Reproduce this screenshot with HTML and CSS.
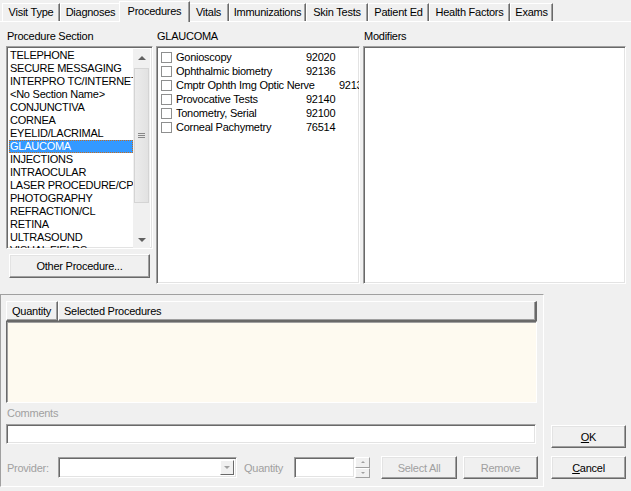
FILE: index.html
```html
<!DOCTYPE html>
<html>
<head>
<meta charset="utf-8">
<link rel="stylesheet" href="styles.css">
</head>
<body>
<div class="dialog">
  <div class="tabs">
    <div class="tab w-visit">Visit Type</div>
    <div class="tab w-diag">Diagnoses</div>
    <div class="tab w-proc active">Procedures</div>
    <div class="tab w-vitals">Vitals</div>
    <div class="tab w-imm">Immunizations</div>
    <div class="tab w-skin">Skin Tests</div>
    <div class="tab w-ped">Patient Ed</div>
    <div class="tab w-hf">Health Factors</div>
    <div class="tab w-exams">Exams</div>
  </div>
  <div class="page">
    <div class="top">
      <div class="col col-section">
        <div class="label">Procedure Section</div>
        <div class="listbox sunken">
          <ul class="items">
            <li>TELEPHONE</li>
            <li>SECURE MESSAGING</li>
            <li>INTERPRO TC/INTERNET</li>
            <li>&lt;No Section Name&gt;</li>
            <li>CONJUNCTIVA</li>
            <li>CORNEA</li>
            <li>EYELID/LACRIMAL</li>
            <li class="selected">GLAUCOMA</li>
            <li>INJECTIONS</li>
            <li>INTRAOCULAR</li>
            <li>LASER PROCEDURE/CPT</li>
            <li>PHOTOGRAPHY</li>
            <li>REFRACTION/CL</li>
            <li>RETINA</li>
            <li>ULTRASOUND</li>
            <li>VISUAL FIELDS</li>
          </ul>
          <div class="vscroll">
            <div class="sb-btn"><span class="arrow-up"></span></div>
            <div class="sb-track">
              <div class="sb-thumb"><span class="grip"></span></div>
            </div>
            <div class="sb-btn"><span class="arrow-down"></span></div>
          </div>
        </div>
        <div class="btn btn-other">Other Procedure...</div>
      </div>
      <div class="col col-proc">
        <div class="label">GLAUCOMA</div>
        <div class="box sunken proc-box">
          <div class="chk-row"><span class="chk"></span><span class="pname">Gonioscopy</span><span class="pcode">92020</span></div>
          <div class="chk-row"><span class="chk"></span><span class="pname">Ophthalmic biometry</span><span class="pcode">92136</span></div>
          <div class="chk-row"><span class="chk"></span><span class="pname wide">Cmptr Ophth Img Optic Nerve</span><span class="pcode">92133</span></div>
          <div class="chk-row"><span class="chk"></span><span class="pname">Provocative Tests</span><span class="pcode">92140</span></div>
          <div class="chk-row"><span class="chk"></span><span class="pname">Tonometry, Serial</span><span class="pcode">92100</span></div>
          <div class="chk-row"><span class="chk"></span><span class="pname">Corneal Pachymetry</span><span class="pcode">76514</span></div>
        </div>
      </div>
      <div class="col col-mod">
        <div class="label">Modifiers</div>
        <div class="box sunken mod-box"></div>
      </div>
    </div>
    <div class="lower">
      <div class="panel">
        <div class="listview">
          <div class="lv-header">
            <div class="hd hd-qty">Quantity</div>
            <div class="hd hd-sel">Selected Procedures</div>
          </div>
          <div class="lv-body"></div>
        </div>
        <div class="label disabled comments-label">Comments</div>
        <div class="edit sunken comments"></div>
        <div class="prov-row">
          <span class="disabled prov-label">Provider:</span>
          <div class="combo sunken">
            <div class="combo-btn"><span class="arrow-down small"></span></div>
          </div>
          <span class="disabled qty-label">Quantity</span>
          <div class="edit sunken qty-edit"></div>
          <div class="spin">
            <div class="spin-btn"><span class="arrow-up tiny"></span></div>
            <div class="spin-btn"><span class="arrow-down tiny"></span></div>
          </div>
          <div class="btn disabled-btn btn-selall">Select All</div>
          <div class="btn disabled-btn btn-remove">Remove</div>
        </div>
      </div>
      <div class="side">
        <div class="btn btn-ok"><u>O</u>K</div>
        <div class="btn btn-cancel"><u>C</u>ancel</div>
      </div>
    </div>
  </div>
</div>
</body>
</html>
```

FILE: styles.css
```css
html, body {
  margin: 0;
  padding: 0;
  background: #f0f0f0;
}
body {
  font-family: "Liberation Sans", Arial, sans-serif;
  font-size: 11px;
  letter-spacing: -0.25px;
  color: #000;
  width: 631px;
  height: 491px;
  overflow: hidden;
}
.dialog {
  display: flex;
  flex-direction: column;
}

/* tabs */
.tabs {
  display: flex;
  align-items: flex-end;
  height: 21px;
  padding-left: 2px;
}
.tab {
  box-sizing: border-box;
  height: 18px;
  line-height: 16px;
  text-align: center;
  border-top: 1px solid #fff;
  border-left: 1px solid #fff;
  border-right: 1px solid #696969;
  box-shadow: inset -1px 0 #a0a0a0;
  background: #f0f0f0;
  white-space: nowrap;
}
.tab.active {
  height: 21px;
  margin: 0 -2px -1px -2px;
  line-height: 18px;
  position: relative;
  z-index: 2;
}
.w-visit { width: 58px; }
.w-diag { width: 61px; }
.w-proc { width: 67px; }
.tab.w-proc.active { width: 71px; }
.w-vitals { width: 41px; }
.w-imm { width: 77px; }
.w-skin { width: 62px; }
.w-ped { width: 61px; }
.w-hf { width: 81px; }
.w-exams { width: 43px; }

.page {
  border-top: 1px solid #fff;
}

.sunken {
  box-sizing: border-box;
  border: 1px solid;
  border-color: #a0a0a0 #fff #fff #a0a0a0;
  box-shadow: inset 1px 1px #696969, inset -1px -1px #e3e3e3;
}
.label {
  height: 13px;
  line-height: 13px;
  white-space: nowrap;
}

.top {
  display: flex;
  padding-top: 8px;
}
.col-section {
  width: 147px;
  margin-left: 6px;
}
.col-proc {
  width: 204px;
  margin-left: 3px;
}
.col-mod {
  width: 263px;
  margin-left: 3px;
}
.col .label {
  margin-left: 1px;
  margin-bottom: 3px;
}

.listbox {
  height: 203px;
  background: #fff;
  display: flex;
  padding: 2px 2px 0 2px;
  overflow: hidden;
}
.items {
  list-style: none;
  margin: 0;
  padding: 0;
  flex: 1;
  overflow: hidden;
  height: 199px;
}
.items li {
  height: 13px;
  line-height: 13px;
  padding-left: 1px;
  white-space: nowrap;
  overflow: hidden;
}
.items li.selected {
  background: #3399ff;
  color: #fff;
  outline: 1px dotted #c66d1f;
  outline-offset: -1px;
}
.vscroll {
  width: 17px;
  height: 199px;
  display: flex;
  flex-direction: column;
  background: #f0f0f0;
}
.sb-btn {
  height: 17px;
  display: flex;
  align-items: center;
  justify-content: center;
}
.sb-track {
  flex: 1;
  padding: 2px 1px;
  background: #f0f0f0;
}
.sb-thumb {
  box-sizing: border-box;
  height: 135px;
  border: 1px solid #d4d4d4;
  background: linear-gradient(to right, #ececec, #e2e2e2);
  display: flex;
  align-items: center;
  justify-content: center;
}
.grip {
  width: 7px;
  height: 5px;
  border-top: 1px solid #888;
  border-bottom: 1px solid #888;
  box-sizing: border-box;
  background: linear-gradient(#888, #888) center / 100% 1px no-repeat;
}
.arrow-up {
  width: 0;
  height: 0;
  border-left: 4px solid transparent;
  border-right: 4px solid transparent;
  border-bottom: 4px solid #606060;
}
.arrow-down {
  width: 0;
  height: 0;
  border-left: 4px solid transparent;
  border-right: 4px solid transparent;
  border-top: 4px solid #606060;
}
.arrow-down.small {
  border-left-width: 3px;
  border-right-width: 3px;
  border-top: 3px solid #a0a0a0;
}
.arrow-up.tiny {
  border-left-width: 2px;
  border-right-width: 2px;
  border-bottom: 2px solid #a0a0a0;
}
.arrow-down.tiny {
  border-left-width: 2px;
  border-right-width: 2px;
  border-top: 2px solid #a0a0a0;
}

.btn {
  box-sizing: border-box;
  display: flex;
  align-items: center;
  justify-content: center;
  border: 1px solid;
  border-color: #fff #696969 #696969 #fff;
  box-shadow: inset -1px -1px #a0a0a0, inset 1px 1px #e3e3e3;
  background: #f0f0f0;
  white-space: nowrap;
}
.btn u {
  text-decoration: underline;
}
.btn-other {
  width: 141px;
  height: 24px;
  margin: 5px 0 0 3px;
}

.box {
  background: #fff;
}
.proc-box, .mod-box {
  height: 238px;
}
.proc-box {
  padding: 3px 2px 2px 4px;
  overflow: hidden;
}
.chk-row {
  display: flex;
  align-items: center;
  height: 14px;
  white-space: nowrap;
}
.chk {
  box-sizing: border-box;
  width: 11px;
  height: 11px;
  border: 1px solid #8e8f8f;
  background: #fff;
  flex: none;
}
.pname {
  margin-left: 4px;
  width: 130px;
  flex: none;
}
.pname.wide {
  width: 163px;
}
.pcode {
  flex: none;
}

/* lower */
.lower {
  display: flex;
  margin-top: 10px;
}
.panel {
  box-sizing: border-box;
  width: 544px;
  height: 193px;
  border: 1px solid;
  border-color: #a0a0a0 #fff #fff #a0a0a0;
  padding: 6px 0 0 5px;
}
.listview {
  width: 531px;
}
.lv-header {
  display: flex;
  height: 20px;
}
.hd {
  box-sizing: border-box;
  height: 20px;
  line-height: 18px;
  border: 1px solid;
  border-color: #fff #696969 #696969 #fff;
  box-shadow: inset -1px -1px #a0a0a0;
  padding-left: 5px;
  white-space: nowrap;
}
.hd-qty {
  width: 52px;
}
.hd-sel {
  flex: 1;
  border-right-width: 2px;
}
.lv-body {
  box-sizing: border-box;
  height: 82px;
  background: #fefaf0;
  border: 1px solid;
  border-color: #696969 #fff #fff #696969;
  box-shadow: inset 1px 1px #a0a0a0;
}
.disabled {
  color: #a0a0a0;
}
.comments-label {
  margin-top: 4px;
  margin-left: 1px;
}
.comments {
  width: 530px;
  height: 20px;
  margin-top: 4px;
  background: #fff;
}
.prov-row {
  display: flex;
  align-items: center;
  margin-top: 12px;
  height: 23px;
}
.prov-label {
  width: 51px;
  padding-left: 1px;
}
.combo {
  width: 179px;
  height: 21px;
  background: #fff;
  display: flex;
  justify-content: flex-end;
  align-items: center;
  padding-right: 2px;
}
.combo-btn {
  box-sizing: border-box;
  width: 14px;
  height: 15px;
  border: 1px solid;
  border-color: #fff #696969 #696969 #fff;
  background: #f0f0f0;
  display: flex;
  align-items: center;
  justify-content: center;
}
.qty-label {
  margin-left: 7px;
  width: 50px;
}
.qty-edit {
  width: 61px;
  height: 21px;
  background: #fff;
}
.spin {
  display: flex;
  flex-direction: column;
  width: 15px;
  height: 21px;
}
.spin-btn {
  box-sizing: border-box;
  flex: 1;
  border: 1px solid;
  border-color: #fff #a0a0a0 #a0a0a0 #fff;
  background: #f0f0f0;
  display: flex;
  align-items: center;
  justify-content: center;
}
.disabled-btn {
  color: #a0a0a0;
  height: 23px;
}
.btn-selall {
  width: 76px;
  margin-left: 11px;
}
.btn-remove {
  width: 75px;
  margin-left: 6px;
}
.side {
  display: flex;
  flex-direction: column;
  margin-left: 7px;
  padding-top: 131px;
  gap: 8px;
}
.side .btn {
  width: 75px;
  height: 23px;
}
```
